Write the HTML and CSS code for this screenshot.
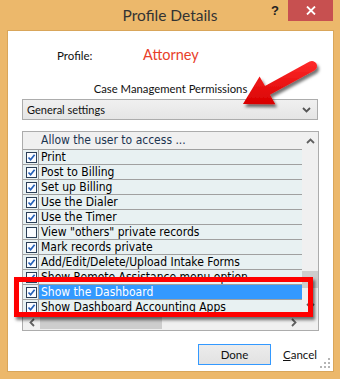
FILE: index.html
```html
<!DOCTYPE html>
<html>
<head>
<meta charset="utf-8">
<link rel="stylesheet" href="styles.css">
</head>
<body>
<div class="window">
  <div class="titlebar">
    <div class="tb-side"></div>
    <div class="title">Profile Details</div>
    <div class="tb-side tb-right">
      <div class="help">?</div>
      <div class="close">
        <svg width="10" height="9" viewBox="0 0 10 9"><path d="M1 0.5 L9 8.5 M9 0.5 L1 8.5" stroke="#fff" stroke-width="1.8"/></svg>
      </div>
    </div>
  </div>
  <div class="client">
    <div class="profile-row">
      <span class="profile-label">Profile:</span>
      <span class="profile-value">Attorney</span>
    </div>
    <div class="section-label">Case Management Permissions</div>
    <div class="select">
      <span>General settings</span>
      <svg class="chev" width="9" height="6" viewBox="0 0 9 6"><path d="M1 1 L4.5 4.5 L8 1" fill="none" stroke="#555" stroke-width="1.8"/></svg>
    </div>
    <div class="list">
      <div class="rows">
        <div class="header">Allow the user to access ...</div>
        <div class="row"><span class="cbcell"><span class="cb on"></span></span><span class="txt">Print</span></div>
        <div class="row"><span class="cbcell"><span class="cb on"></span></span><span class="txt">Post to Billing</span></div>
        <div class="row"><span class="cbcell"><span class="cb on"></span></span><span class="txt">Set up Billing</span></div>
        <div class="row"><span class="cbcell"><span class="cb on"></span></span><span class="txt">Use the Dialer</span></div>
        <div class="row"><span class="cbcell"><span class="cb on"></span></span><span class="txt">Use the Timer</span></div>
        <div class="row"><span class="cbcell"><span class="cb"></span></span><span class="txt">View "others" private records</span></div>
        <div class="row"><span class="cbcell"><span class="cb on"></span></span><span class="txt">Mark records private</span></div>
        <div class="row"><span class="cbcell"><span class="cb on"></span></span><span class="txt">Add/Edit/Delete/Upload Intake Forms</span></div>
        <div class="row"><span class="cbcell"><span class="cb on"></span></span><span class="txt">Show Remote Assistance menu option</span></div>
        <div class="row selected"><span class="cbcell"><span class="cb on"></span></span><span class="txt">Show the Dashboard</span></div>
        <div class="row"><span class="cbcell"><span class="cb on"></span></span><span class="txt">Show Dashboard Accounting Apps</span></div>
      </div>
      <div class="vscroll">
        <div class="sbtn"><svg width="9" height="6" viewBox="0 0 9 6"><path d="M1 5 L4.5 1.5 L8 5" fill="none" stroke="#606060" stroke-width="1.8"/></svg></div>
        <div class="vtrack"><div class="vthumb"></div></div>
        <div class="sbtn"><svg width="9" height="6" viewBox="0 0 9 6"><path d="M1 1 L4.5 4.5 L8 1" fill="none" stroke="#606060" stroke-width="1.8"/></svg></div>
      </div>
      <div class="hscroll">
        <div class="sbtn"><svg width="6" height="9" viewBox="0 0 6 9"><path d="M5 1 L1.5 4.5 L5 8" fill="none" stroke="#606060" stroke-width="1.8"/></svg></div>
        <div class="htrack"><div class="hthumb"></div></div>
        <div class="sbtn"><svg width="6" height="9" viewBox="0 0 6 9"><path d="M1 1 L4.5 4.5 L1 8" fill="none" stroke="#606060" stroke-width="1.8"/></svg></div>
      </div>
      <div class="corner"></div>
    </div>
    <div class="buttons">
      <div class="btn-done">Done</div>
      <div class="btn-cancel"><span class="u">C</span>ancel</div>
    </div>
    <svg class="grip" width="10" height="10" viewBox="0 0 10 10">
      <rect x="8" y="0" width="2" height="2" fill="#b5b5b5"/>
      <rect x="4" y="4" width="2" height="2" fill="#b5b5b5"/>
      <rect x="8" y="4" width="2" height="2" fill="#b5b5b5"/>
      <rect x="0" y="8" width="2" height="2" fill="#b5b5b5"/>
      <rect x="4" y="8" width="2" height="2" fill="#b5b5b5"/>
      <rect x="8" y="8" width="2" height="2" fill="#b5b5b5"/>
    </svg>
  </div>
  <div class="highlight"></div>
  <svg class="arrow" width="340" height="379" viewBox="0 0 340 379">
    <defs>
      <linearGradient id="rg" x1="0" y1="0" x2="0" y2="1">
        <stop offset="0" stop-color="#ff2a2a"/>
        <stop offset="1" stop-color="#d80000"/>
      </linearGradient>
      <filter id="sh" x="-20%" y="-20%" width="150%" height="160%">
        <feDropShadow dx="2" dy="3" stdDeviation="1.8" flood-color="#000" flood-opacity="0.55"/>
      </filter>
    </defs>
    <path d="M243 104 L259.6 76.4 L265 86 L309.6 61.6 A5 5 0 0 1 314.4 70.4 L269.9 94.7 L275.3 104.3 Z" fill="url(#rg)" filter="url(#sh)"/>
  </svg>
</div>
</body>
</html>
```
FILE: styles.css
```css
* { box-sizing: border-box; }
html, body { margin: 0; padding: 0; }
body {
  width: 340px;
  height: 379px;
  overflow: hidden;
  background: #ecb86b;
  font-family: Lato, "Noto Sans", sans-serif;
}
.window {
  position: relative;
  width: 340px;
  height: 379px;
  display: flex;
  flex-direction: column;
  background: #ecb86b;
}
.titlebar {
  height: 31px;
  display: flex;
  align-items: flex-start;
}
.tb-side {
  flex: 1 1 0;
  min-width: 0;
}
.tb-right {
  display: flex;
  justify-content: flex-end;
}
.title {
  font-size: 15.5px;
  line-height: 20px;
  padding-top: 5px;
  color: #333;
  white-space: nowrap;
}
.help {
  width: 26px;
  height: 21px;
  display: flex;
  align-items: center;
  justify-content: center;
  font: bold 13px "Liberation Sans", sans-serif;
  color: #222;
}
.close {
  width: 45px;
  height: 21px;
  margin-right: 7px;
  background: #c75050;
  display: flex;
  align-items: center;
  justify-content: center;
}
.client {
  flex: 1;
  margin: 0 7px 8px 8px;
  background: #fff;
  position: relative;
  display: flex;
  flex-direction: column;
  box-shadow: 0 0 0 1px rgba(160, 110, 40, 0.25);
}
.profile-row {
  display: flex;
  align-items: baseline;
  padding: 14px 0 0 49px;
  line-height: 20px;
}
.profile-label {
  width: 86px;
  font-size: 11.5px;
  color: #111;
}
.profile-value {
  font-size: 14.5px;
  color: #e8402a;
}
.section-label {
  margin-top: 15px;
  font-size: 11.3px;
  line-height: 16px;
  text-align: center;
  color: #111;
}
.select {
  margin: 2px 0 0 14px;
  width: 296px;
  height: 21px;
  border: 1px solid #acacac;
  background: linear-gradient(#f0f0f0, #e5e5e5);
  display: flex;
  align-items: center;
  justify-content: space-between;
  padding: 0 6px 0 4px;
  font-size: 11px;
  color: #111;
}
.list {
  margin: 11px 0 0 14px;
  width: 297px;
  height: 200px;
  border: 1px solid #acacac;
  display: grid;
  grid-template-columns: 279px 16px;
  grid-template-rows: 182px 16px;
  overflow: hidden;
}
.rows {
  overflow: hidden;
  background: #e8f1f2;
  font-family: "DejaVu Sans Condensed", "DejaVu Sans", sans-serif;
  font-stretch: condensed;
  font-size: 12px;
}
.header {
  height: 18px;
  line-height: 17px;
  border-bottom: 1px solid #a0a0a0;
  background: #f0f0f0;
  padding-left: 18px;
  color: #1c3550;
  white-space: nowrap;
}
.row {
  height: 15px;
  display: flex;
  border-bottom: 1px solid #a0a0a0;
}
.cbcell {
  width: 16px;
  flex: none;
  border-right: 1px solid #a0a0a0;
  padding: 2px 0 0 3px;
}
.cb {
  display: block;
  width: 11px;
  height: 11px;
  border: 1px solid #2b3f57;
  background: #fafcff;
}
.cb.on {
  background: #fafcff url("data:image/svg+xml;utf8,<svg xmlns='http://www.w3.org/2000/svg' width='9' height='9' viewBox='0 0 9 9'><path d='M1.5 4.5 L3.6 6.8 L7.6 1.8' fill='none' stroke='%232460b8' stroke-width='1.7'/></svg>") no-repeat center;
}
.txt {
  flex: 1;
  padding-left: 2px;
  line-height: 14px;
  color: #000;
  white-space: nowrap;
}
.selected .txt {
  background: #3399ff;
  color: #fff;
}
.vscroll {
  background: #f0f0f0;
  display: flex;
  flex-direction: column;
}
.sbtn {
  flex: none;
  width: 16px;
  height: 17px;
  display: flex;
  align-items: center;
  justify-content: center;
}
.hscroll .sbtn {
  width: 17px;
  height: 16px;
}
.vtrack {
  flex: 1;
  padding-top: 122px;
}
.vthumb {
  height: 17px;
  background: #cdcdcd;
}
.hscroll {
  background: #f0f0f0;
  display: flex;
}
.htrack {
  flex: 1;
  padding: 1px 0 1px 0;
}
.hthumb {
  width: 122px;
  height: 14px;
  background: #cdcdcd;
}
.corner {
  background: #f0f0f0;
}
.buttons {
  margin-top: 13px;
  display: flex;
  justify-content: flex-end;
  align-items: center;
  padding-right: 16px;
  font-size: 11.5px;
}
.btn-done {
  width: 73px;
  height: 21px;
  border: 1px solid #3399ff;
  background: linear-gradient(#ececec, #e2e2e2);
  display: flex;
  align-items: center;
  justify-content: center;
  color: #111;
}
.btn-cancel {
  margin-left: 12px;
  color: #111;
}
.btn-cancel .u {
  text-decoration: underline;
}
.grip {
  position: absolute;
  right: 3px;
  bottom: 3px;
}
.highlight {
  position: absolute;
  left: 14px;
  top: 277px;
  width: 299px;
  height: 40px;
  border: 5px solid #ff0000;
  box-shadow: 2px 3px 3px rgba(0, 0, 0, 0.55);
}
.arrow {
  position: absolute;
  left: 0;
  top: 0;
  pointer-events: none;
}
```
